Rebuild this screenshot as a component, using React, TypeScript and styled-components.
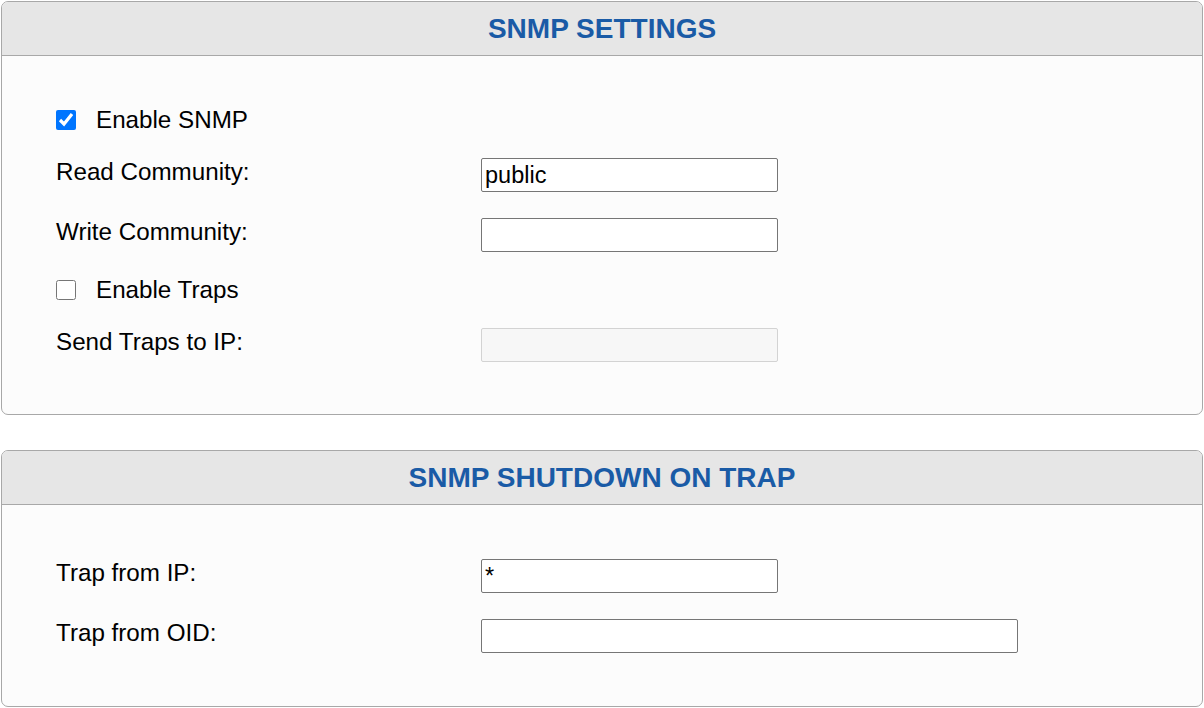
import React from 'react';
import styled, { createGlobalStyle } from 'styled-components';

const GlobalStyle = createGlobalStyle`
  html, body {
    margin: 0;
    padding: 0;
    background: #ffffff;
  }

  body {
    font-family: 'Liberation Sans', Arial, sans-serif;
    color: #000;
  }
`;

type Field = {
  label: string;
  value?: string;
  width?: number;
  disabled?: boolean;
};

type Item =
  | { kind: 'check'; label: string; checked: boolean }
  | ({ kind: 'field' } & Field);

const SECTIONS: { title: string; padTop: number; padBottom: number; items: Item[] }[] = [
  {
    title: 'SNMP SETTINGS',
    padTop: 52,
    padBottom: 52,
    items: [
      { kind: 'check', label: 'Enable SNMP', checked: true },
      { kind: 'field', label: 'Read Community:', value: 'public' },
      { kind: 'field', label: 'Write Community:', value: '' },
      { kind: 'check', label: 'Enable Traps', checked: false },
      { kind: 'field', label: 'Send Traps to IP:', value: '', disabled: true },
    ],
  },
  {
    title: 'SNMP SHUTDOWN ON TRAP',
    padTop: 54,
    padBottom: 53,
    items: [
      { kind: 'field', label: 'Trap from IP:', value: '*' },
      { kind: 'field', label: 'Trap from OID:', value: '', width: 537 },
    ],
  },
];

export default function App() {
  return (
    <>
      <GlobalStyle />
      <Page>
        {SECTIONS.map((section) => (
          <Panel key={section.title}>
            <PanelHeader>
              <Title>{section.title}</Title>
            </PanelHeader>
            <PanelBody $padTop={section.padTop} $padBottom={section.padBottom}>
              {section.items.map((item) =>
                item.kind === 'check' ? (
                  <CheckRow key={item.label}>
                    <Checkbox type="checkbox" defaultChecked={item.checked} />
                    <CheckText>{item.label}</CheckText>
                  </CheckRow>
                ) : (
                  <FieldRow key={item.label}>
                    <Label>{item.label}</Label>
                    <TextInput
                      type="text"
                      defaultValue={item.value}
                      disabled={item.disabled}
                      $width={item.width ?? 297}
                    />
                  </FieldRow>
                )
              )}
            </PanelBody>
          </Panel>
        ))}
      </Page>
    </>
  );
}

const Page = styled.div`
  display: flex;
  flex-direction: column;
  gap: 35px;
  padding: 1px 1px 0 1px;
`;

const Panel = styled.section`
  border: 1px solid #a8a8a8;
  border-radius: 7px;
  overflow: hidden;
  background: #fcfcfc;
`;

const PanelHeader = styled.div`
  height: 53px;
  display: flex;
  align-items: center;
  justify-content: center;
  background: #e6e6e6;
  border-bottom: 1px solid #a8a8a8;
`;

const Title = styled.h2`
  margin: 0;
  font-size: 28px;
  font-weight: bold;
  color: #1a5ba6;
`;

const PanelBody = styled.div<{ $padTop: number; $padBottom: number }>`
  display: flex;
  flex-direction: column;
  gap: 26px;
  padding: ${(p) => p.$padTop}px 54px ${(p) => p.$padBottom}px;
`;

const CheckRow = styled.label`
  display: flex;
  align-items: center;
  gap: 20px;
  height: 24px;
`;

const Checkbox = styled.input`
  width: 20px;
  height: 20px;
  margin: 0;
  accent-color: #0075ff;
`;

const CheckText = styled.span`
  font-size: 24.2px;
`;

const FieldRow = styled.div`
  display: grid;
  grid-template-columns: 425px auto;
  align-items: start;
`;

const Label = styled.span`
  font-size: 24.2px;
`;

const TextInput = styled.input<{ $width: number }>`
  box-sizing: border-box;
  width: ${(p) => p.$width}px;
  height: 34px;
  margin: 0;
  padding: 0 3px;
  border: 1px solid #767676;
  border-radius: 2px;
  background: #fff;
  font-family: 'Liberation Sans', Arial, sans-serif;
  font-size: 23.5px;
  color: #000;
  outline: none;

  &:disabled {
    background: #f7f7f7;
    border-color: #d3d3d3;
  }
`;
